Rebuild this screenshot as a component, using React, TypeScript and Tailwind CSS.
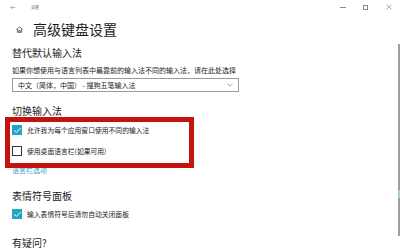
import { Check } from 'lucide-react'

const font = { fontFamily: '"Noto Sans CJK SC", "Noto Sans", sans-serif' }

function CheckRow({ checked, label, className }: { checked: boolean; label: string; className?: string }) {
  return (
    <div className={`flex h-[10px] items-center gap-[5px] ${className ?? ''}`}>
      {checked ? (
        <div className="flex h-[10px] w-[10px] items-center justify-center bg-[#22a6c3]">
          <Check size={9} strokeWidth={2.5} className="text-white" />
        </div>
      ) : (
        <div className="h-[10px] w-[10px] border-[1.5px] border-[#333]" />
      )}
      <span className="text-[6.8px] leading-[10px] text-[#222]">{label}</span>
    </div>
  )
}

export default function App() {
  return (
    <div className="relative h-[250px] w-[400px] overflow-hidden bg-white" style={font}>
      {/* title bar */}
      <div className="flex h-[14px] items-center">
        <svg width="6" height="5" viewBox="0 0 6 5" className="ml-[10px]">
          <path d="M2.5 0.5 L0.5 2.5 L2.5 4.5 M0.5 2.5 H5.5" stroke="#9a9a9a" strokeWidth="0.7" fill="none" />
        </svg>
        <span className="ml-[15px] text-[4px] leading-[14px] text-[#666]">设置</span>
        <div className="ml-auto flex items-center">
          <div className="h-[0.7px] w-[6px] bg-[#888]" />
          <div className="ml-[17px] h-[5px] w-[5px] border-[0.7px] border-[#888]" />
          <svg width="6" height="6" viewBox="0 0 6 6" className="ml-[18px] mr-[8px]">
            <path d="M0.5 0.5 L5.5 5.5 M5.5 0.5 L0.5 5.5" stroke="#888" strokeWidth="0.7" />
          </svg>
        </div>
      </div>

      {/* page title */}
      <div className="mt-[8px] flex h-[14px] items-center">
        <svg width="7" height="7" viewBox="0 0 7 7" className="ml-[16px]">
          <path d="M0.6 3.4 L3.5 0.8 L6.4 3.4 M1.4 2.8 V6.3 H5.6 V2.8 M2.8 6.3 V4.4 H4.2 V6.3" stroke="#333" strokeWidth="0.7" fill="none" />
        </svg>
        <span className="ml-[10px] text-[14px] leading-[14px] text-[#1a1a1a]">高级键盘设置</span>
      </div>

      <div className="pl-[12px]">
        <div className="mt-[11px] h-[12px] text-[10px] leading-[12px] text-[#1a1a1a]">替代默认输入法</div>
        <div className="mt-[7px] h-[9px] text-[7px] leading-[9px] text-[#222]">
          如果你想使用与语言列表中最靠前的输入法不同的输入法，请在此处选择
        </div>
        <div className="mt-[3px] flex h-[14px] w-[227px] items-center border border-[#9a9a9a] pl-[5px] pr-[5px]">
          <span className="text-[7px] leading-[12px] text-[#222]">中文（简体，中国） - 搜狗五笔输入法</span>
          <svg width="6" height="4" viewBox="0 0 6 4" className="ml-auto">
            <path d="M0.5 0.8 L3 3.2 L5.5 0.8" stroke="#777" strokeWidth="0.7" fill="none" />
          </svg>
        </div>

        <div className="mt-[13px] h-[12px] text-[10px] leading-[12px] text-[#1a1a1a]">切换输入法</div>
        <CheckRow className="mt-[8px]" checked label="允许我为每个应用窗口使用不同的输入法" />
        <CheckRow className="mt-[11px]" checked={false} label="使用桌面语言栏(如果可用)" />
        <div className="mt-[10px] h-[8px] text-[7px] leading-[8px] text-[#3aa3c4]">语言栏选项</div>

        <div className="mt-[16px] h-[12px] text-[10px] leading-[12px] text-[#1a1a1a]">表情符号面板</div>
        <CheckRow className="mt-[7px]" checked label="输入表情符号后请勿自动关闭面板" />

        <div className="mt-[18px] h-[12px] text-[10px] leading-[12px] text-[#1a1a1a]">有疑问?</div>
      </div>

      {/* scrollbar */}
      <div className="absolute left-[398px] top-[44px] h-[192px] w-[1.5px] bg-[#9d9d9d]" />
      <div className="absolute left-[398px] top-[190px] h-[8px] w-[1.5px] bg-[#a8cce6]" />

      {/* annotation box */}
      <div className="absolute left-[5px] top-[117px] h-[51px] w-[189px] border-[5px] border-[#c4120c]" />
    </div>
  )
}
